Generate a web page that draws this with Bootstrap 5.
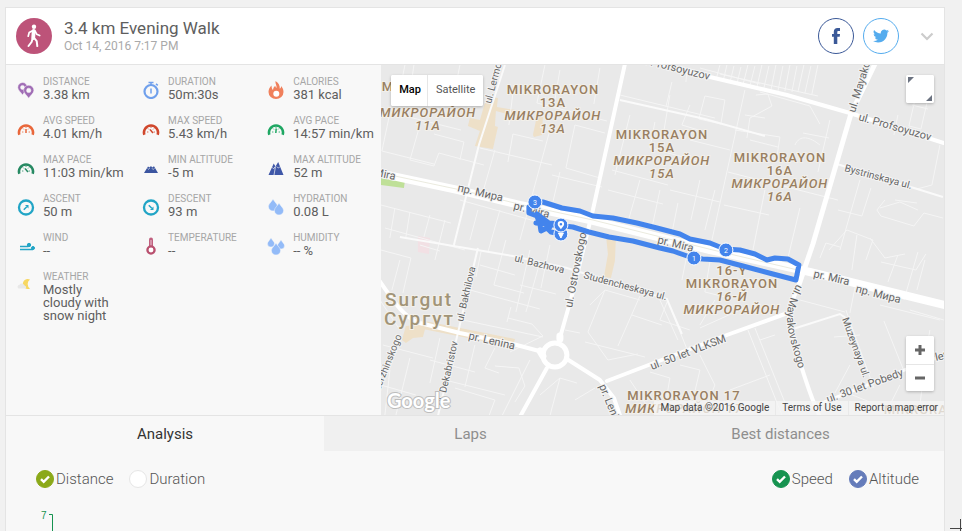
<!DOCTYPE html>
<html lang="en">
<head>
<meta charset="utf-8">
<meta name="viewport" content="width=device-width, initial-scale=1">
<title>3.4 km Evening Walk</title>
<link rel="stylesheet" href="https://cdn.jsdelivr.net/npm/bootstrap@5.3.0/dist/css/bootstrap.min.css">
<style>
  body { font-family: Roboto, "Liberation Sans", sans-serif; background: #f1f1f1; color: #5e5e5e; padding: 7px 17px 0 5px; }
  .workout { background: #f8f8f8; border: 1px solid #e4e4e4; border-bottom: 0; }
  .workout-head { background: #fff; border-bottom: 1px solid #e4e4e4; padding: 10px 9px 10px 10px; min-height: 57px; }
  .sport { width: 36px; height: 36px; background: #bd5379; margin-right: 12px; }
  .workout-title { font-size: 17px; line-height: 20px; font-weight: 400; }
  .workout-date { font-size: 12px; line-height: 16px; color: #a9a9a9; }
  .share { width: 36px; height: 36px; border: 1px solid currentColor; background: #fff; margin-left: 9px; }
  .share-fb { color: #3b5998; }
  .share-tw { color: #55acee; }
  .more { width: 16px; height: 36px; margin-left: 20px; }

  .summary { min-height: 350px; }
  .stats { flex: 0 0 40%; padding: 11px 0 13px; }
  .stat { padding-left: 11px; margin-bottom: 14px; }
  .stat svg { flex: none; width: 18px; height: 18px; margin: 5px 8px 0 0; }
  .stat dt { font-size: 10px; line-height: 12px; font-weight: 400; color: #a6a6a6; text-transform: uppercase; white-space: nowrap; }
  .stat dd { font-size: 13px; line-height: 13px; margin: 0; }
  .stat-wrap dd { max-width: 72px; }

  .map { background: #e9e9e9; min-width: 0; }
  .map-canvas { width: 100%; height: 100%; position: absolute; inset: 0; }
  .ctl { background: #fff; border-radius: 2px; box-shadow: 0 1px 3px rgba(0,0,0,.25); overflow: hidden; }
  .ctl button { border: 0; background: #fff; padding: 0; color: #565656; font-size: 11px; }
  .ctl-type { top: 10px; left: 10px; height: 31px; }
  .ctl-type button { padding: 0 8px; }
  .ctl-type .on { color: #000; font-weight: 500; border-right: 1px solid #e6e6e6; padding-right: 6px; }
  .ctl-full { top: 10px; right: 10px; }
  .ctl-zoom { bottom: 24px; right: 10px; }
  .ctl-sq { width: 28px; height: 28px; }
  .ctl-zoom .ctl-sq + .ctl-sq { border-top: 1px solid #e6e6e6; height: 27px; }
  .credits { right: 0; bottom: 0; height: 14px; font-size: 10px; line-height: 14px; }
  .credits > * { background: rgba(245,245,245,.75); color: #444; text-decoration: none; padding: 0 6px; margin-left: 1px; }

  .m-label { font: 400 10px Roboto, sans-serif; fill: #666; stroke: #f4f4f4; stroke-width: 2px; paint-order: stroke; }
  .m-street { font-size: 11px; }
  .m-area { font: 500 13px Roboto, sans-serif; letter-spacing: 1px; fill: #997f62; stroke: #f3f0ea; stroke-width: 2px; paint-order: stroke; text-anchor: middle; }
  .m-ru { font-style: italic; }
  .m-city { font: 500 19px Roboto, sans-serif; letter-spacing: 2px; fill: #a19478; stroke: #f3f0ea; stroke-width: 2px; paint-order: stroke; }
  .m-logo { font: 700 20px Lato, sans-serif; fill: #fff; stroke: #bdbdbd; stroke-width: 2px; paint-order: stroke; }
  .m-pin { font: 400 7px Roboto, sans-serif; fill: #fff; text-anchor: middle; }

  .tabs { border-top: 1px solid #e4e4e4; }
  .tabs button { border: 0; background: #f0f0f0; color: #8e8e8e; font-size: 15px; line-height: 22px; padding: 7px 0 6px; flex: 293 0 0; }
  .tabs .tab-wide { flex-grow: 327; }
  .tabs .on { background: #f8f8f8; color: #333; flex-grow: 318; }

  .options { padding: 16px 25px 16px 30px; font-size: 15px; font-weight: 300; line-height: 24px; color: #555; }
  .options .form-check-input { width: 18px; height: 18px; border-radius: 50%; border: 1px solid #e6e6e6; margin: 0 2px 0 0; background-color: #fff;
    background-image: none; background-size: 12px 12px; }
  .options .form-check-input:checked { background-color: var(--dot); border-color: var(--dot);
    background-image: url("data:image/svg+xml,%3csvg xmlns='http://www.w3.org/2000/svg' viewBox='0 0 12 12'%3e%3cpath fill='none' stroke='%23fff' stroke-width='2.4' d='M2 6.2l2.700 2.600L10 3.500'/%3e%3c/svg%3e"); }
  .dot-olive { --dot: #8ba919; }
  .dot-green { --dot: #169350; }
  .dot-blue { --dot: #657cba; }
  .chart { flex: 1 1 0; min-height: 0; padding: 0 30px; }
  .chart svg { display: block; width: 100%; height: 200px; }
  .chart text { font: 10px "Liberation Sans", sans-serif; fill: #169350; }
  .resizer { position: fixed; right: 0; bottom: 0; width: 12px; height: 12px; }
</style>
<script src="https://cdn.jsdelivr.net/npm/bootstrap@5.3.0/dist/js/bootstrap.bundle.min.js"></script>
</head>
<body class="vh-100 overflow-hidden d-flex flex-column">
<svg class="d-none" aria-hidden="true">
  <symbol id="gauge" viewBox="0 0 18 18">
    <path d="M2.400 14.800A7 7 0 1 1 15.600 14.800" fill="none" stroke="currentColor" stroke-width="2.600"/>
    <path d="M5 12h1.400M11.600 12H13M6 8.500l1 1M12 8.500l-1 1M9 6.800v1.200" stroke="currentColor" stroke-width=".8"/>
  </symbol>
  <symbol id="drop" viewBox="0 0 10 12"><path d="M5 0C6.500 3 9.600 4.900 9.600 7.600A4.500 4.300 0 0 1 .4 7.600C.4 4.900 3.500 3 5 0z" fill="#93bbf8" stroke="#f8f8f8" stroke-width=".5"/></symbol>
</svg>

<main class="workout flex-grow-1 d-flex flex-column overflow-hidden">
  <header class="workout-head d-flex align-items-center">
    <span class="sport rounded-circle d-flex align-items-center justify-content-center flex-shrink-0">
      <svg width="18" height="24" viewBox="0 0 18 24" fill="none" stroke="#fff" stroke-linecap="round" stroke-linejoin="round">
        <circle cx="9" cy="2.700" r="2.200" fill="#fff" stroke="none"/>
        <path d="M8.700 7l-.5 7" stroke-width="3.800"/><path d="M8 6.500L4.200 8.600 3.200 12.200M10 7l1.700 3.200 3 1.300" stroke-width="1.700"/>
        <path d="M7.600 14.500l-1 3.500-3.100 4M9.200 14l2.500 3.200.6 4.900" stroke-width="2"/>
      </svg>
    </span>
    <div class="me-auto">
      <h1 class="workout-title mb-0">3.4 km Evening Walk</h1>
      <div class="workout-date">Oct 14, 2016 7:17 PM</div>
    </div>
    <button class="share share-fb btn p-0 rounded-circle d-flex align-items-center justify-content-center" aria-label="Share on Facebook">
      <svg width="9" height="16" viewBox="0 0 9 16" fill="currentColor"><path d="M1.800 16V8.700H0V5.900h1.800V3.800C1.800 1.300 3.200 0 5.500 0H8v3H6.600C5.500 3 5.300 3.500 5.300 4.300v1.600H8L7.700 8.700H5.300V16z"/></svg>
    </button>
    <button class="share share-tw btn p-0 rounded-circle d-flex align-items-center justify-content-center" aria-label="Share on Twitter">
      <svg width="16" height="14" viewBox="0 0 16 14" fill="currentColor"><path d="M5.026 13.500c6.038 0 9.341-5.003 9.341-9.334q.002-.211-.006-.422A6.700 6.700 0 0 0 16 2.042a6.600 6.600 0 0 1-1.889.518 3.300 3.300 0 0 0 1.447-1.817 6.500 6.500 0 0 1-2.087.793A3.286 3.286 0 0 0 7.875 4.530 9.300 9.300 0 0 1 1.112 1.100 3.290 3.290 0 0 0 2.130 5.483 3.200 3.200 0 0 1 .64 5.073v.041a3.290 3.290 0 0 0 2.633 3.218 3.200 3.200 0 0 1-.865.115 3 3 0 0 1-.614-.057 3.280 3.280 0 0 0 3.067 2.277A6.600 6.600 0 0 1 .78 12.076a6 6 0 0 1-.78-.045 9.340 9.340 0 0 0 5.026 1.469"/></svg>
    </button>
    <button class="more btn border-0 p-0 d-flex align-items-center justify-content-center" aria-label="More options">
      <svg width="14" height="9" viewBox="0 0 14 9" fill="none" stroke="#ccc" stroke-width="2.200"><path d="M1.500 1.500L7 7l5.500-5.500"/></svg>
    </button>
  </header>

  <section class="summary d-flex">
    <dl class="stats row row-cols-3 g-0 align-content-start mb-0">
      <div class="stat d-flex"><svg viewBox="0 0 18 18"><g fill="#a06db5" stroke="#f8f8f8" stroke-width=".5" fill-rule="evenodd"><path d="M5.500 1.500a4.800 4.800 0 0 0-4.700 5c0 2.700 3 4.500 4.700 7.500 1.700-3 4.800-4.800 4.800-7.500a4.800 4.800 0 0 0-4.800-5zm0 2.900a2 2 0 1 1 0 4 2 2 0 0 1 0-4z"/><path d="M11.700 4.200A5.100 5.100 0 0 0 6.600 9.300c0 3 3.400 5 5.100 8 1.700-3 5.200-5 5.200-8a5.100 5.100 0 0 0-5.200-5.100zm0 3a2.200 2.200 0 1 1 0 4.400 2.200 2.200 0 0 1 0-4.400z"/></g></svg><div><dt>Distance</dt><dd>3.38 km</dd></div></div>
      <div class="stat d-flex"><svg viewBox="0 0 18 18" fill="none" stroke="#70a0ec"><circle cx="9" cy="10.500" r="6.500" stroke-width="2.200"/><path d="M6.500 1.500h5M9 1.500v2.500M14 2.800l1.800 1.500M9 7.500v5" stroke-width="1.500"/></svg><div><dt>Duration</dt><dd>50m:30s</dd></div></div>
      <div class="stat d-flex"><svg viewBox="0 0 18 18"><path d="M8.500 0c-.5 3 1.500 4.300 1 7-.8-.5-1.100-1.300-1.200-2.200C6 6.500 6.500 7.500 6 9 5 8 4.600 6.500 4.500 4.500 2.500 6.800 1.500 8.300 1.500 11a7.500 7 0 0 0 15 0c0-3-1.200-4.500-2.300-6-.1 1.300-.6 2.200-1.400 2.800C13 4.500 11.500 1.500 8.500 0z" fill="#f0805c"/><circle cx="9.300" cy="12.700" r="3" fill="#fff"/></svg><div><dt>Calories</dt><dd>381 kcal</dd></div></div>

      <div class="stat d-flex"><svg color="#e9673b"><use href="#gauge"/><path d="M9 9v4" stroke="currentColor" stroke-width="1.500"/></svg><div><dt>Avg speed</dt><dd>4.01 km/h</dd></div></div>
      <div class="stat d-flex"><svg color="#d0472c"><use href="#gauge"/><path d="M8 9.500l3 3.500" stroke="currentColor" stroke-width="1.500"/></svg><div><dt>Max speed</dt><dd>5.43 km/h</dd></div></div>
      <div class="stat d-flex"><svg color="#1fa763"><use href="#gauge"/><path d="M9.200 8.500L8.800 13" stroke="currentColor" stroke-width="1.500"/></svg><div><dt>Avg pace</dt><dd class="text-nowrap">14:57 min/km</dd></div></div>

      <div class="stat d-flex"><svg color="#278a63"><use href="#gauge"/><path d="M8 9.500l3 3.500" stroke="currentColor" stroke-width="1.500"/></svg><div><dt>Max pace</dt><dd class="text-nowrap">11:03 min/km</dd></div></div>
      <div class="stat d-flex"><svg viewBox="0 0 18 18"><path d="M2 14l4-6.500 1.500 1L9 7l1.200 1.500L12 7.200 16 14z" fill="#3b55a0"/><path d="M5.500 9.300l1.200 1 1-1M10 9.300l1.200 1.200 1.200-1.200" fill="none" stroke="#f8f8f8" stroke-width=".7"/></svg><div><dt>Min altitude</dt><dd>-5 m</dd></div></div>
      <div class="stat d-flex"><svg viewBox="0 0 18 18"><path d="M1.500 16L6.700 4.500l1.800 3L11.200 3 16.500 16z" fill="#3f57a8"/><path d="M5.200 8.500l1.500 1.200 1.400-2M9.800 7.500l1.500 1.500 1.500-1M8.500 7.500L7 16" fill="none" stroke="#f8f8f8" stroke-width=".7"/></svg><div><dt>Max altitude</dt><dd>52 m</dd></div></div>

      <div class="stat d-flex"><svg viewBox="0 0 18 18" stroke="#22a5c6" fill="none"><circle cx="9" cy="9.500" r="7" stroke-width="2.300"/><path d="M6.800 11.700l3-3" stroke-width="1.500"/><path d="M8 7h3.500v3.500z" fill="#22a5c6" stroke="none"/></svg><div><dt>Ascent</dt><dd>50 m</dd></div></div>
      <div class="stat d-flex"><svg viewBox="0 0 18 18" stroke="#22a5c6" fill="none"><circle cx="9" cy="9.500" r="7" stroke-width="2.300"/><path d="M6.800 7.300l3 3" stroke-width="1.500"/><path d="M11.500 8.500V12H8z" fill="#22a5c6" stroke="none"/></svg><div><dt>Descent</dt><dd>93 m</dd></div></div>
      <div class="stat d-flex"><svg viewBox="0 0 18 18"><use href="#drop" x="1" y="1" width="10" height="12"/><use href="#drop" x="7" y="5" width="10" height="12"/></svg><div><dt>Hydration</dt><dd>0.08 L</dd></div></div>

      <div class="stat d-flex"><svg viewBox="0 0 18 18" stroke="#22a5c6" fill="#22a5c6"><path d="M3 9.500h8.500M3 12.500h13" stroke-width="1.300"/><circle cx="12" cy="8" r="1.700"/><circle cx="16" cy="11" r="1.500"/></svg><div><dt>Wind</dt><dd>--</dd></div></div>
      <div class="stat d-flex"><svg viewBox="0 0 18 18"><path d="M9 2.500v9" stroke="#c0607f" stroke-width="4" stroke-linecap="round"/><path d="M9 3v9" stroke="#dca2b4" stroke-width="1.500"/><circle cx="9" cy="13" r="3.600" fill="#fff" stroke="#b9506f" stroke-width="2.300"/></svg><div><dt>Temperature</dt><dd>--</dd></div></div>
      <div class="stat d-flex"><svg viewBox="0 0 18 18"><use href="#drop" x="0" y="1" width="8" height="9"/><use href="#drop" x="10" y="3" width="8" height="9"/><use href="#drop" x="4" y="6" width="10" height="12"/></svg><div><dt>Humidity</dt><dd>-- %</dd></div></div>

      <div class="stat stat-wrap d-flex"><svg viewBox="0 0 18 18"><path d="M13 3.500a5 5 0 1 0 0 9 5.500 5.500 0 0 1 0-9z" fill="#f7d762"/><path d="M1.500 12.500a2 2 0 0 1 1-3.700 3 3 0 0 1 5.300 1 1.500 1.500 0 0 1 .7 2.700z" fill="#e8e8e8"/></svg><div><dt>Weather</dt><dd>Mostly cloudy with snow night</dd></div></div>
    </dl>

    <div class="map position-relative flex-grow-1 overflow-hidden">
      <svg class="map-canvas" viewBox="381 65 563 350" preserveAspectRatio="xMidYMid slice" role="img" aria-label="Map of the walk in Surgut">
        <!-- buildings and parks -->
        <g fill="#eee0c8">
          <path d="M487 96l11 2-1 9 24 4-2 6-23-6-1 15 3 1-5 22-18-3 5-15-12-5 2-8 10 2z"/>
          <path d="M537 116l6 1-1 18-8 2-1-2z"/>
          <path d="M606 235l10 2-1 24-4 17-7-1 4-23zM417 325l9 1-3 11-10 1-7 5-4-3 4-14zM425 321l90 18-2 8-90-18z"/>
        </g>
        <path d="M418 236l12 2-1 16-11-2z" fill="#f2e0e4"/>
        <path d="M381 178l24 3-1 7-23-3z" fill="#bfe098"/>
        <!-- lanes -->
        <g fill="none" stroke="#f5f5f5" stroke-width="1">
          <path d="M405 65l-6 30M414 65l-5 35 30 9M430 106l4-20 40 6M440 75l-3 17M460 65l-4 20M381 110l80 20M390 113l-8 38 52 13M420 125l-10 35 24 6 5-13 45 12M434 134l30 8-4 18M480 148l72 17M495 150l-12 42M550 130l-30 110M508 162l5-28 30 7M514 85l-5 40M545 65l-8 38 70 18M560 70l-5 30M600 68l-6 36M575 125l-9 43 34 10M575 125l30 8"/>
          <path d="M552 175l50 12M560 172l-7 30M608 190l55 14M612 170l56 15M620 95l95 23M630 115l-15 60M655 122l-5 26 55 15M670 95l-7 42M640 180l-12 42M660 190l-8 38M672 82l-6 25M690 105l-8 20 20 6M705 96l20 4-4 24-22-5zM745 90l-33 150M745 115l20 3M750 140l28 7M756 95l12-1 4 12-22 12-3 20M760 92l50 14 10 18"/>
          <path d="M680 66l7 4-1 12M700 68l60 16M720 65l-4 15M727 65l-4 17M734 66l-4 17M741 67l-4 17M748 65l-5 20M755 66l-5 20M762 65l-5 22M769 66l-5 22M776 65l-5 25M783 66l-5 25M790 65l-5 26M797 66l-5 26M804 65l-6 27M811 66l-6 27M818 65l-6 29M720 74l98 22"/>
          <path d="M735 130l45 7-3 20M728 172l110 28M795 145c5-11 15-8 25 0M830 120l-12 52M803 133l26 5M700 180l-9 40M715 190l-10 40M678 203l-6 30M690 140l40 10M670 190l50 12M724 205l45 10M765 190l-12 60M838 210l24 6 9-28M860 180l-10 35-10 35M800 208l-12 50M915 100l-6 26 12 3 6-26M912 105l16 4M898 115l-4 20M940 145l-8 40-15 4M885 200l-8 10 4 6 33 10 10-13 19 5M880 208l20-6 18 8M895 200l22 3"/>
          <path d="M381 205l70 18M395 208l-5 30M410 212l-4 25M381 250l30 8-8 35M430 215l-6 22M445 220l-10 40M385 228l80 22M478 210l-8 30M500 210l-12 42M460 200l75 21M506 240l-12 45 30 8M530 250l-14 62M480 265l35 10M520 285l36 9M470 290l70 19M540 262l-14 50M481 252l-5 25M550 245l-9 43M400 260l-8 30M420 245l20 6"/>
          <path d="M380 300l20 30M383 345l50 13M440 338l-10 45M430 360l45 12M475 345l-10 42M495 348l-10 20 14 5M455 388l40 12-6 16M495 366l24 2 6 18-10 16M530 360l-28 56M540 395l20-17 17 5M560 378l-10 38M390 370l-5 45M381 385l35 10M410 358l-14 57M445 380l60 15M508 318l24 6 11 12-33 16M507 322l4-15M463 320l80 17"/>
          <path d="M590 305l15-15 35 10M605 290l-17 42 20 28 30-6M640 296l-22 50M660 300l18 40M585 342l60 15M565 330l15 3M632 315l30 10M668 300l-8 20 30 10M667 299l22 55M575 400l20-12M630 380l20 30M650 372l20 6-5 30M680 365l20 5-7 30M700 355l15 30-8 20M690 240l-8 40M710 262l-5 30 20 5M715 300l-15 25M740 310l-40 18M748 330l34 85M755 328l35 87M760 340l15-5M770 375l-40 15"/>
          <path d="M820 258l6-15 14 4M829 250l18-20 26 10-7 20M857 235l-5 35M870 238l15 20 20-4M898 255l-10 27M881 262l35 8 10-16M918 252l-14 48M925 260l-8 30M855 288l-5 25M880 305l60 15M884 321l20 50M846 310l28 78M850 365l-15 28M860 335l-26 2M910 310l34 10M840 390l30 12M900 385l-10 20M925 365l-5 40M930 330l-5 30M800 300l45 12"/>
        </g>
        <!-- side streets -->
        <g fill="none" stroke="#fafafa" stroke-width="2">
          <path d="M505 65l-26 80-25 100M478 248l-20 85-20 83M400 237l113 19 54 12 100 31 15 35M620 100l85 19 60 17M837 164l106 33M793 329l47-15 6 4"/>
        </g>
        <!-- main roads -->
        <g fill="none" stroke="#fff" stroke-linecap="round" stroke-linejoin="round">
          <path d="M378 173l80 17 62 15 70 15 120 30 100 22 135 33" stroke-width="8"/>
          <path d="M640 58l70 19 77 18 63 18 94 30M625 64l-32 146-20 82-13 46" stroke-width="4"/>
          <path d="M876 62l-25 52-38 130-15 44" stroke-width="5"/><path d="M798 288c-12 24-11 34-3 57 7 23 13 46 25 72" stroke-width="4"/>
          <path d="M379 280c14 20 24 37 41 43l40 10 53 11 30 8M547 368l-27 49M567 359l33 21 14 18 7 20M607 381l120-46 58-21" stroke-width="4"/>
          <path d="M820 404l87-35 40-15" stroke-width="3"/>
          <circle cx="555" cy="355" r="12" stroke-width="5" fill="#e9e9e9"/>
          <path d="M560 336v3M540 351l3 5" stroke-width="7"/>
        </g>
        <path d="M381 173l80 17 62 15 70 15 120 30 85 20" fill="none" stroke="#dcdcc8" stroke-width=".6"/>
        <!-- street names -->
        <g class="m-label">
          <text transform="translate(491 104) rotate(-75)">ul. Lermontova</text>
          <text transform="translate(844 171) rotate(15)">Bystrinskaya ul.</text>
          <text transform="translate(514 261) rotate(14)">ul. Bazhova</text>
          <text transform="translate(583 278) rotate(15)">Studencheskaya ul.</text>
          <text transform="translate(463 322) rotate(-77)">ul. Bakhilova</text>
          <text transform="translate(402 336) rotate(-68)" text-anchor="end">ul. Dzerzhinskogo</text>
          <text transform="translate(458 342) rotate(-77)" text-anchor="end">ul. Dekabristov</text>
          <text transform="translate(842 319) rotate(70)">Muzeynaya ul.</text>
          <g class="m-street">
            <text transform="translate(709 80) rotate(14)" text-anchor="end">ul. Profsoyuzov</text>
            <text transform="translate(855 113) rotate(-73)">ul. Mayakovskogo</text>
            <text transform="translate(858 120) rotate(16)">ul. Profsoyuzov</text>
            <text transform="translate(395 180) rotate(12)" text-anchor="end">pr. Mira</text>
            <text transform="translate(457 191) rotate(13)">пр. Мира</text>
            <text transform="translate(513 209) rotate(14)">pr. Mira</text>
            <text transform="translate(657 243) rotate(14)">pr. Mira</text>
            <text transform="translate(813 277) rotate(13)">pr. Mira</text>
            <text transform="translate(855 292) rotate(14)">пр. Мира</text>
            <text transform="translate(572 308) rotate(-79)">ul. Ostrovskogo</text>
            <text transform="translate(468 339) rotate(13)">pr. Lenina</text>
            <text transform="translate(599 386) rotate(68)">pr. Lenina</text>
            <text transform="translate(652 370) rotate(-21)">ul. 50 let VLKSM</text>
            <text transform="translate(828 403) rotate(-20)">ul. 30 let Pobedy</text>
            <text transform="translate(936 361) rotate(-12)">let</text>
            <path id="mayak" d="M797 284c-12 22-12 36-6 58 4 14 7 25 12 42" fill="none" stroke="none"/>
            <text><textPath href="#mayak">ul. Mayakovskogo</textPath></text>
          </g>
        </g>
        <!-- districts -->
        <g class="m-area">
          <text x="428" y="91">MIKRORAYON</text><text class="m-ru" x="428" y="117">МИКРОРАЙОН</text><text class="m-ru" x="428" y="130">11A</text>
          <text x="553" y="94">MIKRORAYON</text><text x="553" y="107">13A</text><text class="m-ru" x="553" y="120">МИКРОРАЙОН</text><text class="m-ru" x="553" y="133">13A</text>
          <text x="662" y="139">MIKRORAYON</text><text x="662" y="152">15A</text><text class="m-ru" x="662" y="165">МИКРОРАЙОН</text><text class="m-ru" x="662" y="178">15A</text>
          <text x="780" y="162">MIKRORAYON</text><text x="780" y="175">16A</text><text class="m-ru" x="780" y="188">МИКРОРАЙОН</text><text class="m-ru" x="780" y="201">16A</text>
          <text x="732" y="275">16-Y</text><text x="732" y="288">MIKRORAYON</text><text class="m-ru" x="732" y="301">16-Й</text><text class="m-ru" x="732" y="314">МИКРОРАЙОН</text>
          <text x="684" y="400">MIKRORAYON 17</text><text class="m-ru" x="684" y="413">МИКРОРАЙОН 17</text><text x="930" y="414">MIKRORAYON</text>
        </g>
        <g class="m-city"><text x="385" y="306">Surgut</text><text x="384" y="325">Сургут</text></g>
        <!-- recorded track -->
        <path d="M535 202l8 0 19 6 18 3 13 5 20 2 24 5 20 5 23 6 10 5 20 4 15 6 15 1 15 4 12 6 8-2 13 1 11 6-3 15-23-6-30-8-23-6-17-1-10-1-20-7-13-3-27-7-24-4-20-5-16-5-17-2-20-2M535 202l-6 5v6l8 3 3 8 1 7 6-3 4 4 10 2M537 214l12 9 12 1M541 221l9 6" fill="none" stroke="#4384ec" stroke-width="5" stroke-linejoin="round" stroke-linecap="round"/>
        <g fill="#4384ec" stroke="#fff" stroke-width="1">
          <circle cx="561" cy="234" r="7"/><path d="M558.500 233h5l-2.500 5z" fill="#fff"/><circle cx="561" cy="225" r="7"/>
          <circle cx="535" cy="202" r="7"/><circle cx="694" cy="258" r="7"/><circle cx="726" cy="250" r="7"/>
        </g>
        <path d="M561 221a3.200 3.200 0 0 0-3.200 3.300c0 1.900 2.200 3 3.200 5 1-2 3.200-3.100 3.200-5A3.200 3.200 0 0 0 561 221zm0 2a1.300 1.300 0 1 1 0 2.600 1.300 1.300 0 0 1 0-2.600z" fill="#fff" fill-rule="evenodd"/>
        <g class="m-pin"><text x="535" y="205">3</text><text x="694" y="261">1</text><text x="726" y="253">2</text></g>
        <text class="m-logo" x="387" y="408">Google</text>
      </svg>

      <div class="ctl ctl-type position-absolute d-flex"><button class="on">Map</button><button>Satellite</button></div>
      <div class="ctl ctl-full position-absolute">
        <button class="ctl-sq d-block" aria-label="Full screen"><svg class="d-block" width="28" height="28" fill="#6b7280"><path d="M2 2h6L2 8zM26 26h-6l6-6z"/></svg></button>
      </div>
      <div class="ctl ctl-zoom position-absolute">
        <button class="ctl-sq d-block" aria-label="Zoom in"><svg class="d-block mx-auto" width="12" height="12" stroke="#666" stroke-width="3"><path d="M1 6h10M6 1v10"/></svg></button>
        <button class="ctl-sq d-block" aria-label="Zoom out"><svg class="d-block mx-auto" width="12" height="12" stroke="#666" stroke-width="3"><path d="M1 6h10"/></svg></button>
      </div>
      <div class="credits position-absolute d-flex"><span>Map data ©2016 Google</span><a href="#">Terms of Use</a><a href="#">Report a map error</a></div>
    </div>
  </section>

  <nav class="tabs d-flex" role="tablist">
    <button class="on" role="tab" aria-selected="true">Analysis</button>
    <button role="tab">Laps</button>
    <button class="tab-wide" role="tab">Best distances</button>
  </nav>

  <form class="options d-flex align-items-center">
    <input class="form-check-input dot-olive flex-shrink-0" type="radio" name="axis" id="axis-distance" checked><label for="axis-distance">Distance</label>
    <input class="form-check-input flex-shrink-0 ms-3" type="radio" name="axis" id="axis-duration"><label class="me-auto" for="axis-duration">Duration</label>
    <input class="form-check-input dot-green flex-shrink-0" type="checkbox" id="show-speed" checked><label for="show-speed">Speed</label>
    <input class="form-check-input dot-blue flex-shrink-0 ms-3" type="checkbox" id="show-altitude" checked><label for="show-altitude">Altitude</label>
  </form>

  <div class="chart overflow-hidden">
    <svg aria-label="Speed axis"><text x="5" y="12">7</text><path d="M13 7.500h3.500V200" fill="none" stroke="#169350"/></svg>
  </div>
</main>
<svg class="resizer" aria-hidden="true"><path d="M0 9.500h12M10.500 0v12" stroke="#444"/></svg>
</body>
</html>
